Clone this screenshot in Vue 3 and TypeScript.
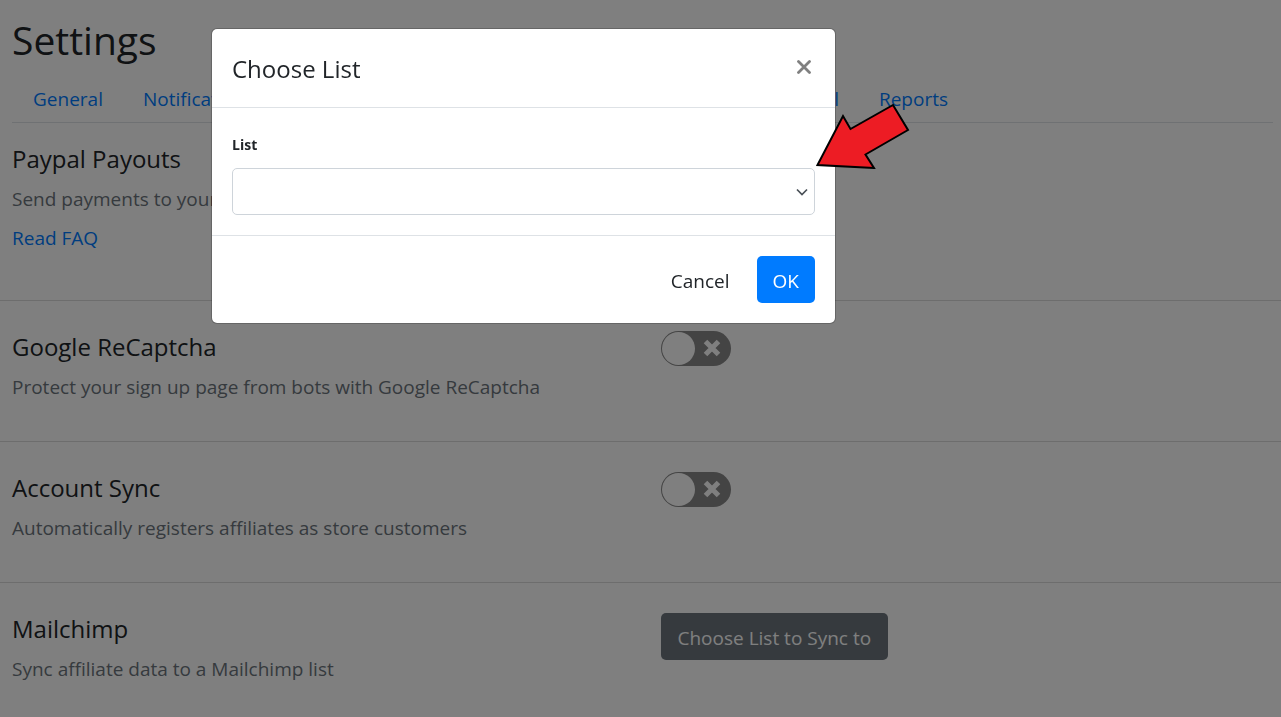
<script setup lang="ts">
import { ref } from 'vue'

interface Setting {
  id: string
  title: string
  description: string
  link?: string
  action?: string
}

const tabsStart: string[] = ['General', 'Notifications']
const tabsEnd: string[] = ['Email', 'Reports']

const settings: Setting[] = [
  { id: 'paypal', title: 'Paypal Payouts', description: 'Send payments to your affiliates', link: 'Read FAQ' },
  { id: 'recaptcha', title: 'Google ReCaptcha', description: 'Protect your sign up page from bots with Google ReCaptcha' },
  { id: 'sync', title: 'Account Sync', description: 'Automatically registers affiliates as store customers' },
  { id: 'mailchimp', title: 'Mailchimp', description: 'Sync affiliate data to a Mailchimp list', action: 'Choose List to Sync to' },
]

const enabled = ref<Record<string, boolean>>({})
const selectedList = ref('')
const modalOpen = ref(true)
</script>

<template>
  <main class="page">
    <header class="page-head">
      <h1>Settings</h1>
      <nav class="tabs">
        <div class="tab-group">
          <a v-for="tab in tabsStart" :key="tab" href="#" class="tab">{{ tab }}</a>
        </div>
        <div class="tab-group">
          <a v-for="tab in tabsEnd" :key="tab" href="#" class="tab">{{ tab }}</a>
        </div>
      </nav>
    </header>

    <section v-for="item in settings" :key="item.id" class="setting">
      <div class="info">
        <h2 :id="item.id">{{ item.title }}</h2>
        <p>{{ item.description }}</p>
        <a v-if="item.link" href="#" class="faq">{{ item.link }}</a>
      </div>
      <div class="control">
        <button v-if="item.action" type="button" class="btn btn-dark" @click="modalOpen = true">{{ item.action }}</button>
        <label v-else class="toggle">
          <input v-model="enabled[item.id]" type="checkbox" :aria-labelledby="item.id" />
          <svg class="toggle-icon" viewBox="0 0 18 18" aria-hidden="true">
            <path d="M2.5 2.5 15.5 15.5M15.5 2.5 2.5 15.5" stroke="#fff" stroke-width="5" />
          </svg>
        </label>
      </div>
    </section>
  </main>

  <div v-if="modalOpen" class="backdrop">
    <div class="modal" role="dialog" aria-labelledby="modal-title">
      <header class="modal-head">
        <h2 id="modal-title">Choose List</h2>
        <button type="button" class="close" aria-label="Close" @click="modalOpen = false">
          <svg viewBox="0 0 14 14" aria-hidden="true">
            <path d="M1.5 1.5 12.5 12.5M12.5 1.5 1.5 12.5" stroke="#808080" stroke-width="2.8" stroke-linecap="round" />
          </svg>
        </button>
      </header>
      <div class="modal-body">
        <label for="list">List</label>
        <div class="select-wrap">
          <select id="list" v-model="selectedList">
            <option value=""></option>
          </select>
          <svg class="chevron" viewBox="0 0 12 8" aria-hidden="true">
            <path d="M1 1.5 6 6.5 11 1.5" fill="none" stroke="#495057" stroke-width="1.7" />
          </svg>
        </div>
      </div>
      <footer class="modal-foot">
        <button type="button" class="btn btn-plain" @click="modalOpen = false">Cancel</button>
        <button type="button" class="btn btn-primary" @click="modalOpen = false">OK</button>
      </footer>
    </div>
  </div>

  <svg class="pointer" viewBox="0 0 96 68" aria-hidden="true">
    <path d="M3.5 64 29 15 36.5 28 79 4 94 29 51.5 53.5 60 67Z" fill="#ed1c24" stroke="#000" stroke-width="2" />
  </svg>
</template>

<style>
body {
  margin: 0;
  background: #fff;
}
</style>

<style scoped>
.page,
.backdrop {
  font-family: "Segoe UI", "Open Sans", "Noto Sans", sans-serif;
  font-size: 19px;
  line-height: 28px;
  color: #212529;
}

h1,
h2,
p {
  margin: 0;
  font-weight: 400;
}

h1 {
  font-size: 39px;
  line-height: 48px;
}

h2 {
  font-size: 24px;
  line-height: 30px;
}

a {
  color: #007bff;
  text-decoration: none;
}

.page-head {
  padding: 16px 8px 0 12px;
}

.tabs {
  display: flex;
  justify-content: space-between;
  padding: 21px calc(100% - 956px) 9px 1px;
  border-bottom: 1px solid #dee2e6;
}

.tab-group {
  display: flex;
}

.tab {
  padding: 0 20px;
}

.setting {
  display: grid;
  grid-template-columns: 1fr 1fr;
  padding: 30px 0 40px;
  border-top: 1px solid #dadada;
}

.page-head + .setting {
  padding: 20px 0 48px;
  border-top: 0;
}

.setting:last-child {
  padding-bottom: 0;
}

.info {
  padding: 1px 0 0 12px;
}

.info p {
  margin-top: 11px;
  color: #6c757d;
}

.faq {
  display: inline-block;
  margin-top: 11px;
}

.control {
  padding-left: 20px;
}

.toggle {
  position: relative;
  display: inline-block;
  width: 70px;
  height: 35px;
}

.toggle input {
  appearance: none;
  display: block;
  width: 100%;
  height: 100%;
  margin: 0;
  border-radius: 18px;
  background: #888;
}

.toggle input::before {
  content: "";
  display: block;
  width: 33px;
  height: 33px;
  position: relative;
  top: 1px;
  left: 1px;
  border-radius: 50%;
  background: #fff;
}

.toggle input:checked {
  background: #28a745;
}

.toggle input:checked::before {
  left: 36px;
}

.toggle input:checked + .toggle-icon {
  left: 9px;
}

.toggle-icon {
  position: absolute;
  top: 8px;
  left: 42px;
  width: 18px;
  height: 18px;
}

.btn {
  height: 47px;
  padding: 2px 17px 0;
  border: 0;
  border-radius: 5px;
  font: inherit;
  color: #fff;
}

.btn-dark {
  background: #6c757d;
}

.btn-primary {
  padding: 2px 16px 0;
  background: #007bff;
}

.btn-plain {
  color: #212529;
  background: transparent;
}

.backdrop {
  position: fixed;
  inset: 0;
  padding: 28px 211px;
  background: rgba(0, 0, 0, 0.5);
}

.modal {
  max-width: 623px;
  border: 1px solid rgba(0, 0, 0, 0.2);
  border-radius: 6px;
  background: #fff;
  background-clip: padding-box;
}

.modal-head {
  display: flex;
  align-items: center;
  justify-content: space-between;
  padding: 25px 20px 23px;
  border-bottom: 1px solid #dee2e6;
}

.close {
  display: flex;
  padding: 4px;
  margin-bottom: 4px;
  border: 0;
  background: transparent;
}

.close svg {
  width: 14px;
  height: 14px;
}

.modal-body {
  padding: 23px 20px 20px;
}

.modal-body label {
  display: block;
  margin-bottom: 9px;
  font-size: 14px;
  font-weight: 700;
}

.select-wrap {
  position: relative;
}

.select-wrap select {
  appearance: none;
  display: block;
  width: 100%;
  height: 47px;
  padding: 0 32px 0 14px;
  border: 1px solid #ced4da;
  border-radius: 5px;
  font: inherit;
  color: #495057;
  background: #fff;
}

.chevron {
  position: absolute;
  top: 20px;
  right: 7px;
  width: 12px;
  height: 8px;
  pointer-events: none;
}

.modal-foot {
  display: flex;
  justify-content: flex-end;
  gap: 10px;
  padding: 20px;
  border-top: 1px solid #dee2e6;
}

.pointer {
  position: fixed;
  top: 101px;
  left: 814px;
  width: 96px;
  height: 68px;
  pointer-events: none;
}
</style>
